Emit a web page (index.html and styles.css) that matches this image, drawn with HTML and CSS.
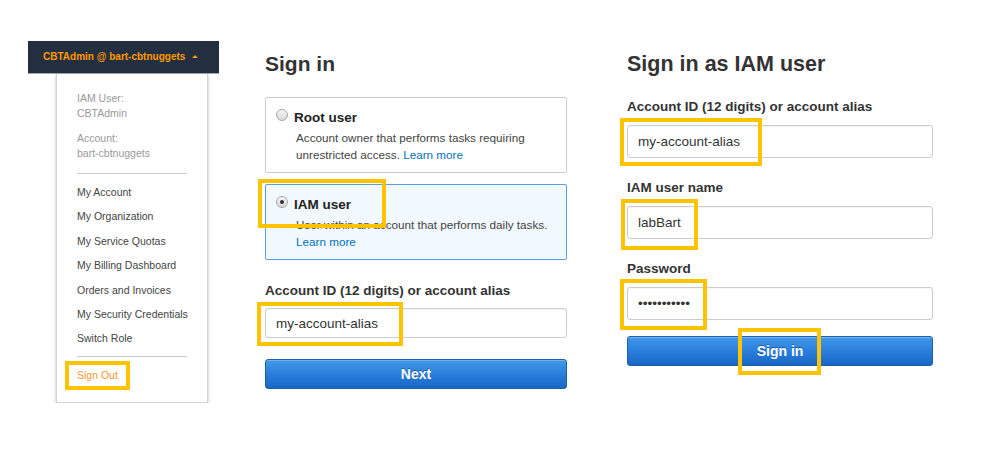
FILE: index.html
```html
<!DOCTYPE html>
<html>
<head>
 <title>Sign in</title>
<link rel="stylesheet" href="styles.css">
</head>
<body>
<div class="page">

 <div class="account-menu">
  <div class="acct-bar">CBTAdmin @ bart-cbtnuggets<span class="caret"></span></div>
  <div class="dropdown">
   <div class="who"><span>IAM User:</span><span>CBTAdmin</span></div>
   <div class="who"><span>Account:</span><span>bart-cbtnuggets</span></div>
   <hr>
   <ul class="menu-links">
    <li>My Account</li>
    <li>My Organization</li>
    <li>My Service Quotas</li>
    <li>My Billing Dashboard</li>
    <li>Orders and Invoices</li>
    <li>My Security Credentials</li>
    <li>Switch Role</li>
   </ul>
   <hr class="last">
   <div class="sign-out">Sign Out<span class="mark mark-out"></span></div>
  </div>
 </div>

 <div class="signin">
  <h1>Sign in</h1>
  <div class="option">
   <div class="opt-title"><span class="radio"></span>Root user</div>
   <p class="desc">Account owner that performs tasks requiring<br>unrestricted access. <a href="#">Learn more</a></p>
  </div>
  <div class="option picked">
   <div class="opt-title"><span class="radio on"></span>IAM user</div>
   <p class="desc">User within an account that performs daily tasks.<br><a href="#">Learn more</a></p>
   <span class="mark mark-iam"></span>
  </div>
  <label class="lbl first-lbl">Account ID (12 digits) or account alias</label>
  <div class="field"><input type="text" value="my-account-alias"><span class="mark mark-alias"></span></div>
  <button class="btn btn-next">Next</button>
 </div>

 <div class="signin iam">
  <h1>Sign in as IAM user</h1>
  <label class="lbl">Account ID (12 digits) or account alias</label>
  <div class="field"><input type="text" value="my-account-alias"><span class="mark mark-acct"></span></div>
  <label class="lbl">IAM user name</label>
  <div class="field"><input type="text" value="labBart"><span class="mark mark-user"></span></div>
  <label class="lbl">Password</label>
  <div class="field"><input type="password" value="abcdefghijk"><span class="mark mark-pass"></span></div>
  <div class="field btn-wrap"><button class="btn">Sign in</button><span class="mark mark-signin"></span></div>
 </div>

</div>
</body>
</html>
```

FILE: styles.css
```css
body { margin: 0; background: #fff; font-family: "Liberation Sans", Arial, sans-serif; color: #333; }
.page { display: flex; align-items: flex-start; padding: 41px 0 0 28px; }

/* account menu */
.account-menu { width: 191px; }
.acct-bar { height: 32px; line-height: 32px; padding-left: 15px; background: #232f3e; color: #f90;
  font-size: 10px; font-weight: bold; border-bottom: 1px solid #a3a8ae; white-space: nowrap; }
.caret { display: inline-block; vertical-align: middle; margin: -2px 0 0 7px; border-left: 3px solid transparent;
  border-right: 3px solid transparent; border-bottom: 3px solid #f90; }
.dropdown { margin-left: 28px; width: 152px; box-sizing: border-box; padding: 17px 20px 15px 20px;
  border: 1px solid #d3d3d3; border-top: none; background: #fff; box-shadow: 0 1px 3px rgba(0,0,0,.25);
  font-size: 10.5px; white-space: nowrap; }
.who span { display: block; line-height: 15px; color: #999; }
.who + .who { margin-top: 10px; }
.dropdown hr { border: 0; border-top: 1px solid #ccc; margin: 12px 0 6px; }
.dropdown hr.last { margin-top: 5px; }
.menu-links { list-style: none; margin: 0; padding: 0; }
.menu-links li { line-height: 24.4px; color: #444; }
.sign-out { position: relative; line-height: 24px; color: #f7962d; }

/* sign in forms */
.signin { width: 302px; margin-left: 46px; }
.signin.iam { width: 306px; margin-left: 60px; }
.signin h1 { margin: 10px 0 0; font-size: 21px; line-height: 26px; color: #333; }
.iam h1 { font-size: 21.5px; }
.option { position: relative; margin-top: 20px; padding: 11px 10px 9px; border: 1px solid #ccc; border-radius: 2px; }
.option + .option { margin-top: 11px; }
.option.picked { background: #f1f8fe; border-color: #5a9fe2; }
.opt-title { display: flex; align-items: flex-start; gap: 6px; line-height: 18px; font-size: 13.5px; font-weight: bold; color: #222; }
.radio { flex: none; position: relative; width: 12px; height: 12px; box-sizing: border-box; border-radius: 50%;
  border: 1px solid #a6a6a6; background: linear-gradient(#f6f6f6, #d8d8d8); }
.radio.on::after { content: ""; position: absolute; left: 3px; top: 3px; width: 4px; height: 4px; border-radius: 50%; background: #333; }
.desc { margin: 2px 0 0 20px; font-size: 11.7px; line-height: 17px; color: #444; }
.desc a { color: #0073bb; text-decoration: none; }

.lbl { display: block; margin-top: 22px; font-size: 13.5px; font-weight: bold; line-height: 16px; color: #333; }
.first-lbl { margin-top: 23px; }
.field { position: relative; margin-top: 10px; }
.signin:not(.iam) .field { margin-top: 9px; }
.field input { display: block; width: 100%; height: 30px; box-sizing: border-box; padding: 0 10px; font: 13.5px "Liberation Sans", Arial, sans-serif;
  color: #333; border: 1px solid #ccc; border-radius: 3px; background: #fff; box-shadow: inset 0 1px 1px rgba(0,0,0,.04); }
.iam .field input { height: 33px; }
.btn { display: block; width: 100%; height: 30px; border: 1px solid #1d5fae; border-radius: 3px;
  background: linear-gradient(#4298e8, #2a7fdc 50%, #1866c6); color: #fff; font: bold 14px "Liberation Sans", Arial, sans-serif;
  text-shadow: 0 -1px 0 rgba(0,0,0,.35); box-shadow: inset 0 1px 0 rgba(255,255,255,.25); }
.btn-next { margin-top: 21px; }
.iam .btn-wrap { margin-top: 16px; }

/* highlight boxes */
.mark { position: absolute; box-sizing: border-box; border: 4px solid #ffc300; pointer-events: none; }
.mark-out { left: -12px; top: -2px; width: 65px; height: 29px; }
.mark-iam { left: -8px; top: -6px; width: 128px; height: 49px; }
.mark-alias { left: -8px; top: -6px; width: 146px; height: 44px; }
.mark-acct { left: -7px; top: -7px; width: 142px; height: 48px; }
.mark-user { left: -6px; top: -7px; width: 77px; height: 51px; }
.mark-pass { left: -7px; top: -8px; width: 87px; height: 51px; }
.mark-signin { left: 111px; top: -8px; width: 83px; height: 47px; }
```
